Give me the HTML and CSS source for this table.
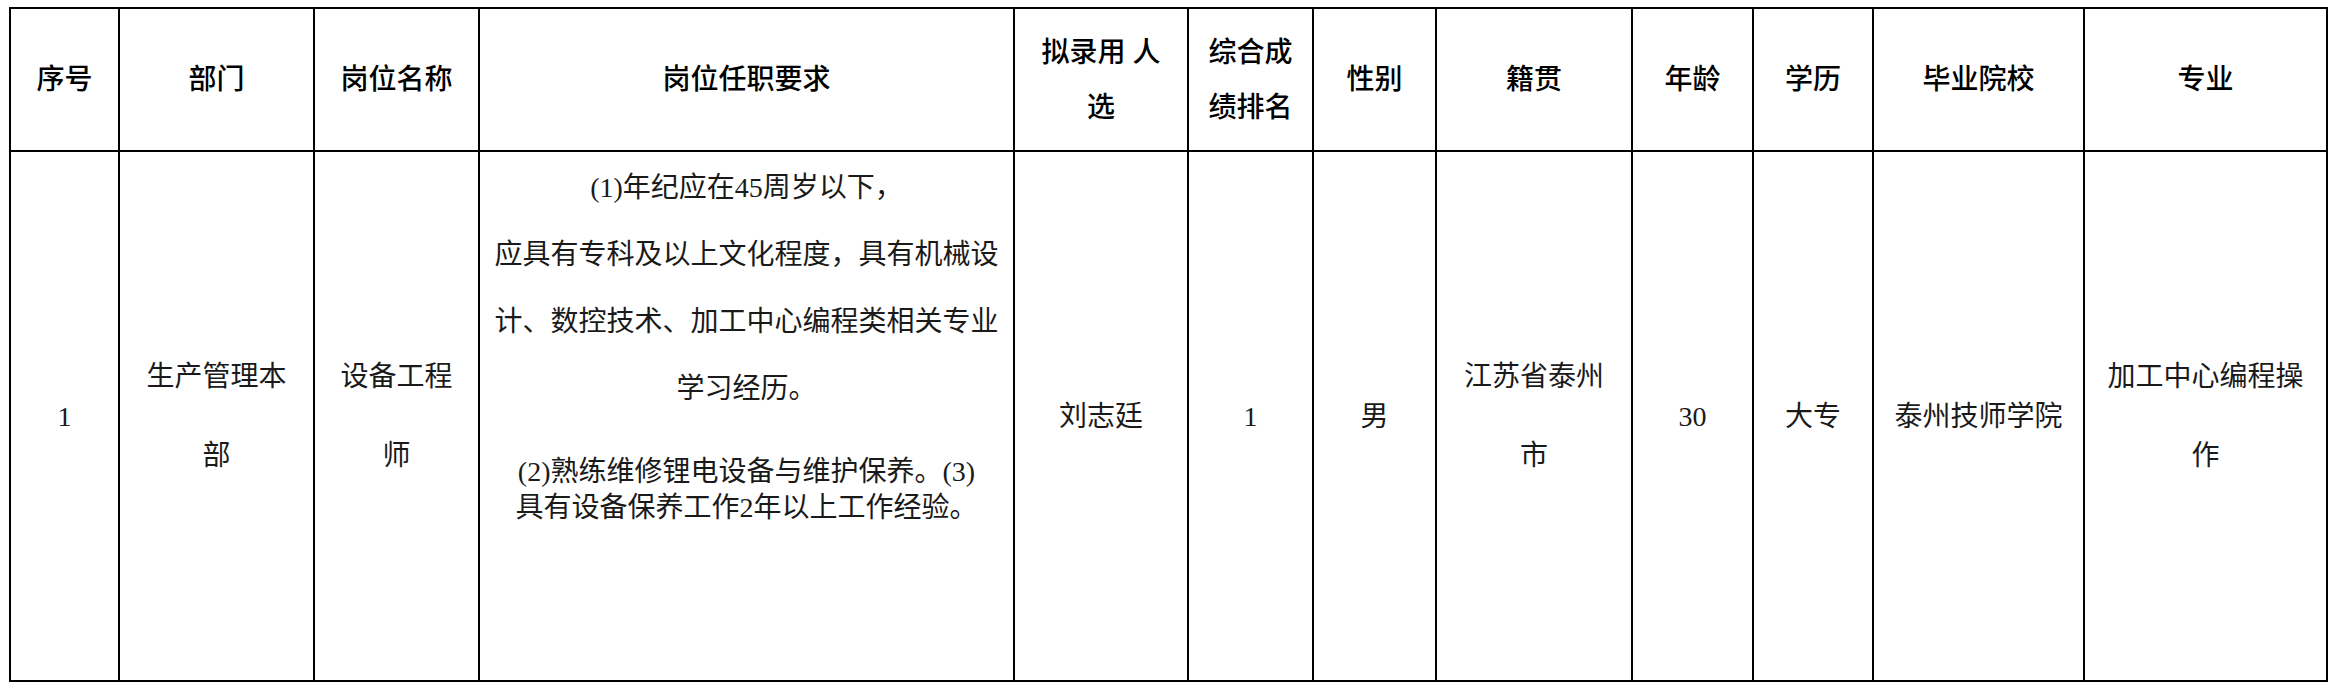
FILE: index.html
```html
<!DOCTYPE html>
<html lang="zh-CN">
<head>
<meta charset="utf-8">
<title>拟录用人选</title>
<link rel="stylesheet" href="styles.css">
</head>
<body>
<div class="sheet" role="table">
  <div class="cell head" role="columnheader">序号</div>
  <div class="cell head" role="columnheader">部门</div>
  <div class="cell head" role="columnheader">岗位名称</div>
  <div class="cell head" role="columnheader">岗位任职要求</div>
  <div class="cell head" role="columnheader">拟录用 人选</div>
  <div class="cell head" role="columnheader">综合成绩排名</div>
  <div class="cell head" role="columnheader">性别</div>
  <div class="cell head" role="columnheader">籍贯</div>
  <div class="cell head" role="columnheader">年龄</div>
  <div class="cell head" role="columnheader">学历</div>
  <div class="cell head" role="columnheader">毕业院校</div>
  <div class="cell head" role="columnheader">专业</div>

  <div class="cell body" role="cell">1</div>
  <div class="cell body" role="cell">生产管理本部</div>
  <div class="cell body" role="cell">设备工程师</div>
  <div class="cell body req" role="cell">
    <p class="para wide">(1)年纪应在45周岁以下，</p>
    <p class="para wide">应具有专科及以上文化程度，具有机械设计、数控技术、加工中心编程类相关专业学习经历。</p>
    <p class="para tight">(2)熟练维修锂电设备与维护保养。(3)<br>具有设备保养工作2年以上工作经验。</p>
  </div>
  <div class="cell body" role="cell">刘志廷</div>
  <div class="cell body" role="cell">1</div>
  <div class="cell body" role="cell">男</div>
  <div class="cell body" role="cell">江苏省泰州市</div>
  <div class="cell body" role="cell">30</div>
  <div class="cell body" role="cell">大专</div>
  <div class="cell body" role="cell">泰州技师学院</div>
  <div class="cell body" role="cell">加工中心编程操作</div>
</div>
</body>
</html>
```
FILE: styles.css
```css
html, body {
  margin: 0;
  padding: 0;
  background: #ffffff;
}

body {
  font-family: "Liberation Serif", "Noto Sans CJK SC", serif;
  font-size: 28px;
  color: #1a1a1a;
}

.sheet {
  display: grid;
  grid-template-columns: 109px 195px 165px 535px 174px 125px 123px 196px 121px 120px 211px 243px;
  grid-template-rows: 143px 530px;
  width: max-content;
  margin: 7px 0 0 9px;
  border-left: 2px solid #000;
  border-top: 2px solid #000;
}

.cell {
  box-sizing: border-box;
  border-right: 2px solid #000;
  border-bottom: 2px solid #000;
  padding: 0 14px;
  display: flex;
  align-items: center;
  justify-content: center;
  text-align: center;
}

.head {
  color: #000;
  font-weight: 500;
  line-height: 55px;
}

.body {
  line-height: 79px;
}

.req {
  display: block;
  padding-top: 2px;
}

.para {
  margin: 0;
}

.wide {
  line-height: 67px;
}

.tight {
  line-height: 36px;
  margin-top: 32px;
}
```
